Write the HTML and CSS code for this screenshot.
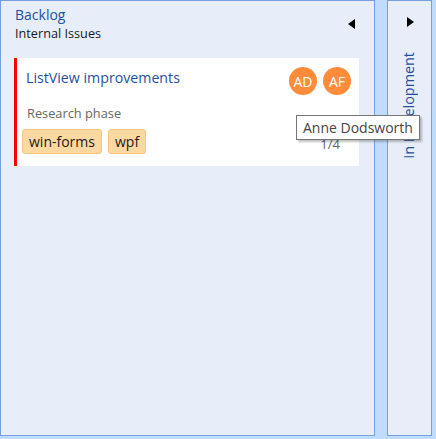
FILE: index.html
```html
<!DOCTYPE html>
<html>
<head>
<meta charset="utf-8">
<link rel="stylesheet" href="styles.css">
</head>
<body>
<div class="board">
  <section class="column expanded">
    <header class="col-header">
      <div class="titles">
        <div class="col-title">Backlog</div>
        <div class="col-sub">Internal Issues</div>
      </div>
      <span class="tri tri-left"></span>
    </header>
    <div class="card">
      <div class="card-top">
        <div class="card-title">ListView improvements</div>
        <div class="avatars">
          <span class="avatar">AD</span>
          <span class="avatar">AF</span>
        </div>
      </div>
      <div class="card-desc">Research phase</div>
      <div class="card-bottom">
        <div class="tags">
          <span class="tag">win-forms</span>
          <span class="tag">wpf</span>
        </div>
        <span class="count">1/4</span>
      </div>
    </div>
  </section>
  <section class="column collapsed">
    <span class="tri tri-right"></span>
    <span class="vtitle">In Development</span>
  </section>
  <div class="tooltip">Anne Dodsworth</div>
</div>
</body>
</html>
```
FILE: styles.css
```css
html, body {
  margin: 0;
  padding: 0;
}
body {
  width: 436px;
  height: 439px;
  background: #c0dcfc;
  font-family: "Open Sans", "Noto Sans", sans-serif;
  overflow: hidden;
}
.board {
  position: relative;
  display: flex;
  align-items: flex-start;
  height: 439px;
}
.column {
  box-sizing: border-box;
  height: 436px;
  background: #e8eef9;
  border: 1px solid #74a0e0;
}
.expanded {
  width: 375px;
  padding: 0 15px 0 13px;
}
.col-header {
  display: flex;
  justify-content: space-between;
  align-items: flex-start;
  padding: 4px 0 0 1px;
  height: 57px;
  box-sizing: border-box;
}
.col-title {
  font-size: 14px;
  line-height: 19px;
  color: #1f4f9e;
}
.col-sub {
  font-size: 12.7px;
  line-height: 17px;
  color: #1a1a1a;
  margin-top: 1px;
}
.tri {
  width: 0;
  height: 0;
  border-top: 5px solid transparent;
  border-bottom: 5px solid transparent;
}
.tri-left {
  border-right: 7px solid #000;
  margin: 14px 4px 0 0;
}
.tri-right {
  border-left: 7px solid #000;
  margin: 16px 0 0 19px;
  display: block;
}
.card {
  background: #fff;
  border-left: 3px solid #ff0000;
  height: 108px;
  box-sizing: border-box;
  padding: 9px 8px 0 0;
}
.card-top {
  display: flex;
  justify-content: space-between;
  align-items: flex-start;
}
.card-title {
  font-size: 14.2px;
  line-height: 20px;
  color: #1f4f9e;
  margin: 1px 0 0 9px;
}
.avatars {
  display: flex;
  gap: 6px;
}
.avatar {
  width: 28px;
  height: 28px;
  border-radius: 50%;
  background: #ff8c3a;
  color: #fff;
  font-size: 14px;
  display: flex;
  align-items: center;
  justify-content: center;
}
.card-desc {
  font-size: 12.8px;
  line-height: 17px;
  color: #666;
  margin: 10px 0 0 10px;
}
.card-bottom {
  display: flex;
  justify-content: space-between;
  align-items: flex-end;
  margin-top: 7px;
}
.tags {
  display: flex;
  gap: 6px;
  margin-left: 5px;
}
.tag {
  box-sizing: border-box;
  height: 25px;
  padding: 0 6px;
  background: #fdd8a0;
  border: 1px solid #f5c47c;
  border-radius: 3px;
  font-size: 14px;
  line-height: 23px;
  color: #1a1a1a;
}
.count {
  font-size: 13px;
  color: #666;
  margin: 0 11px 1px 0;
  line-height: 17px;
}
.collapsed {
  width: 45px;
  margin-left: 12px;
}
.vtitle {
  display: block;
  writing-mode: vertical-rl;
  transform: rotate(180deg);
  font-size: 14.4px;
  color: #1f4f9e;
  margin: 25px 0 0 12px;
  line-height: 18px;
}
.tooltip {
  position: absolute;
  left: 296px;
  top: 115px;
  width: 124px;
  height: 25px;
  box-sizing: border-box;
  background: #fff;
  border: 1px solid #767676;
  box-shadow: 2px 2px 2px rgba(0,0,0,0.25);
  font-size: 14px;
  line-height: 23px;
  color: #444;
  padding-left: 6px;
  white-space: nowrap;
}
```
